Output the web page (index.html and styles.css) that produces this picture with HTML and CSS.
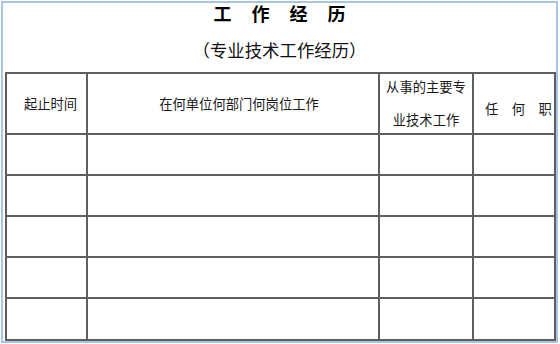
FILE: index.html
```html
<!DOCTYPE html>
<html lang="zh-CN">
<head>
<meta charset="utf-8">
<title>工作经历</title>
<link rel="stylesheet" href="styles.css">
</head>
<body>
<div class="frame">
  <h1 class="title">工作经历</h1>
  <p class="subtitle">（专业技术工作经历）</p>
  <table class="grid">
    <colgroup>
      <col class="c-time">
      <col class="c-unit">
      <col class="c-tech">
      <col class="c-post">
    </colgroup>
    <thead>
      <tr class="head-row">
        <th class="h-time">起止时间</th>
        <th class="h-unit">在何单位何部门何岗位工作</th>
        <th class="h-tech">
          <div class="stack">
            <span class="stack-line">从事的主要专</span>
            <span class="stack-line">业技术工作</span>
          </div>
        </th>
        <th class="h-post">
          <div class="spread"><span>任</span><span>何</span><span>职</span></div>
        </th>
      </tr>
    </thead>
    <tbody>
      <tr class="row"><td></td><td></td><td></td><td></td></tr>
      <tr class="row"><td></td><td></td><td></td><td></td></tr>
      <tr class="row"><td></td><td></td><td></td><td></td></tr>
      <tr class="row"><td></td><td></td><td></td><td></td></tr>
      <tr class="row last"><td></td><td></td><td></td><td></td></tr>
    </tbody>
  </table>
</div>
</body>
</html>
```
FILE: styles.css
```css
html, body {
  margin: 0;
  padding: 0;
  background: #ffffff;
}

body {
  width: 560px;
  height: 344px;
  overflow: hidden;
  font-family: "Noto Sans CJK SC", "Noto Sans", sans-serif;
  color: #111;
}

.frame {
  box-sizing: border-box;
  margin: 1px 0 0 1px;
  width: 557px;
  height: 342px;
  border: 2px solid #a9c4e4;
  background: #fff;
  display: flex;
  flex-direction: column;
  align-items: stretch;
  overflow: hidden;
}

.title {
  margin: 0;
  height: 20px;
  line-height: 20px;
  font-size: 18px;
  font-weight: bold;
  text-align: center;
  letter-spacing: 20px;
  padding-left: 20px;
  color: #000;
}

.subtitle {
  margin: 17px 0 0 0;
  height: 20px;
  line-height: 20px;
  font-size: 17.4px;
  text-align: center;
  color: #111;
}

.grid {
  margin: 12px 0 0 2px;
  width: 549px;
  border-collapse: collapse;
  table-layout: fixed;
}

.c-time { width: 81px; }
.c-unit { width: 292px; }
.c-tech { width: 94px; }
.c-post { width: 82px; }

.grid th,
.grid td {
  border: 2px solid #5e5e5e;
  padding: 0;
  font-weight: normal;
  font-size: 13.3px;
  color: #1a1a1a;
  vertical-align: middle;
}

.head-row { height: 61px; }
.row { height: 41px; }
.row.last { height: 42px; }

.grid .h-time {
  text-align: center;
  padding-left: 8px;
}

.grid .h-unit {
  text-align: center;
  padding-left: 12px;
}

.grid .h-tech {
  text-align: center;
}

.stack {
  height: 57px;
  display: flex;
  flex-direction: column;
  justify-content: space-between;
  align-items: center;
  line-height: 24px;
}

.stack-line {
  display: block;
  height: 24px;
  white-space: nowrap;
}

.grid .h-post {
  padding: 9px 0 0 11px;
}

.spread {
  display: flex;
  gap: 13.5px;
  white-space: nowrap;
}
```
